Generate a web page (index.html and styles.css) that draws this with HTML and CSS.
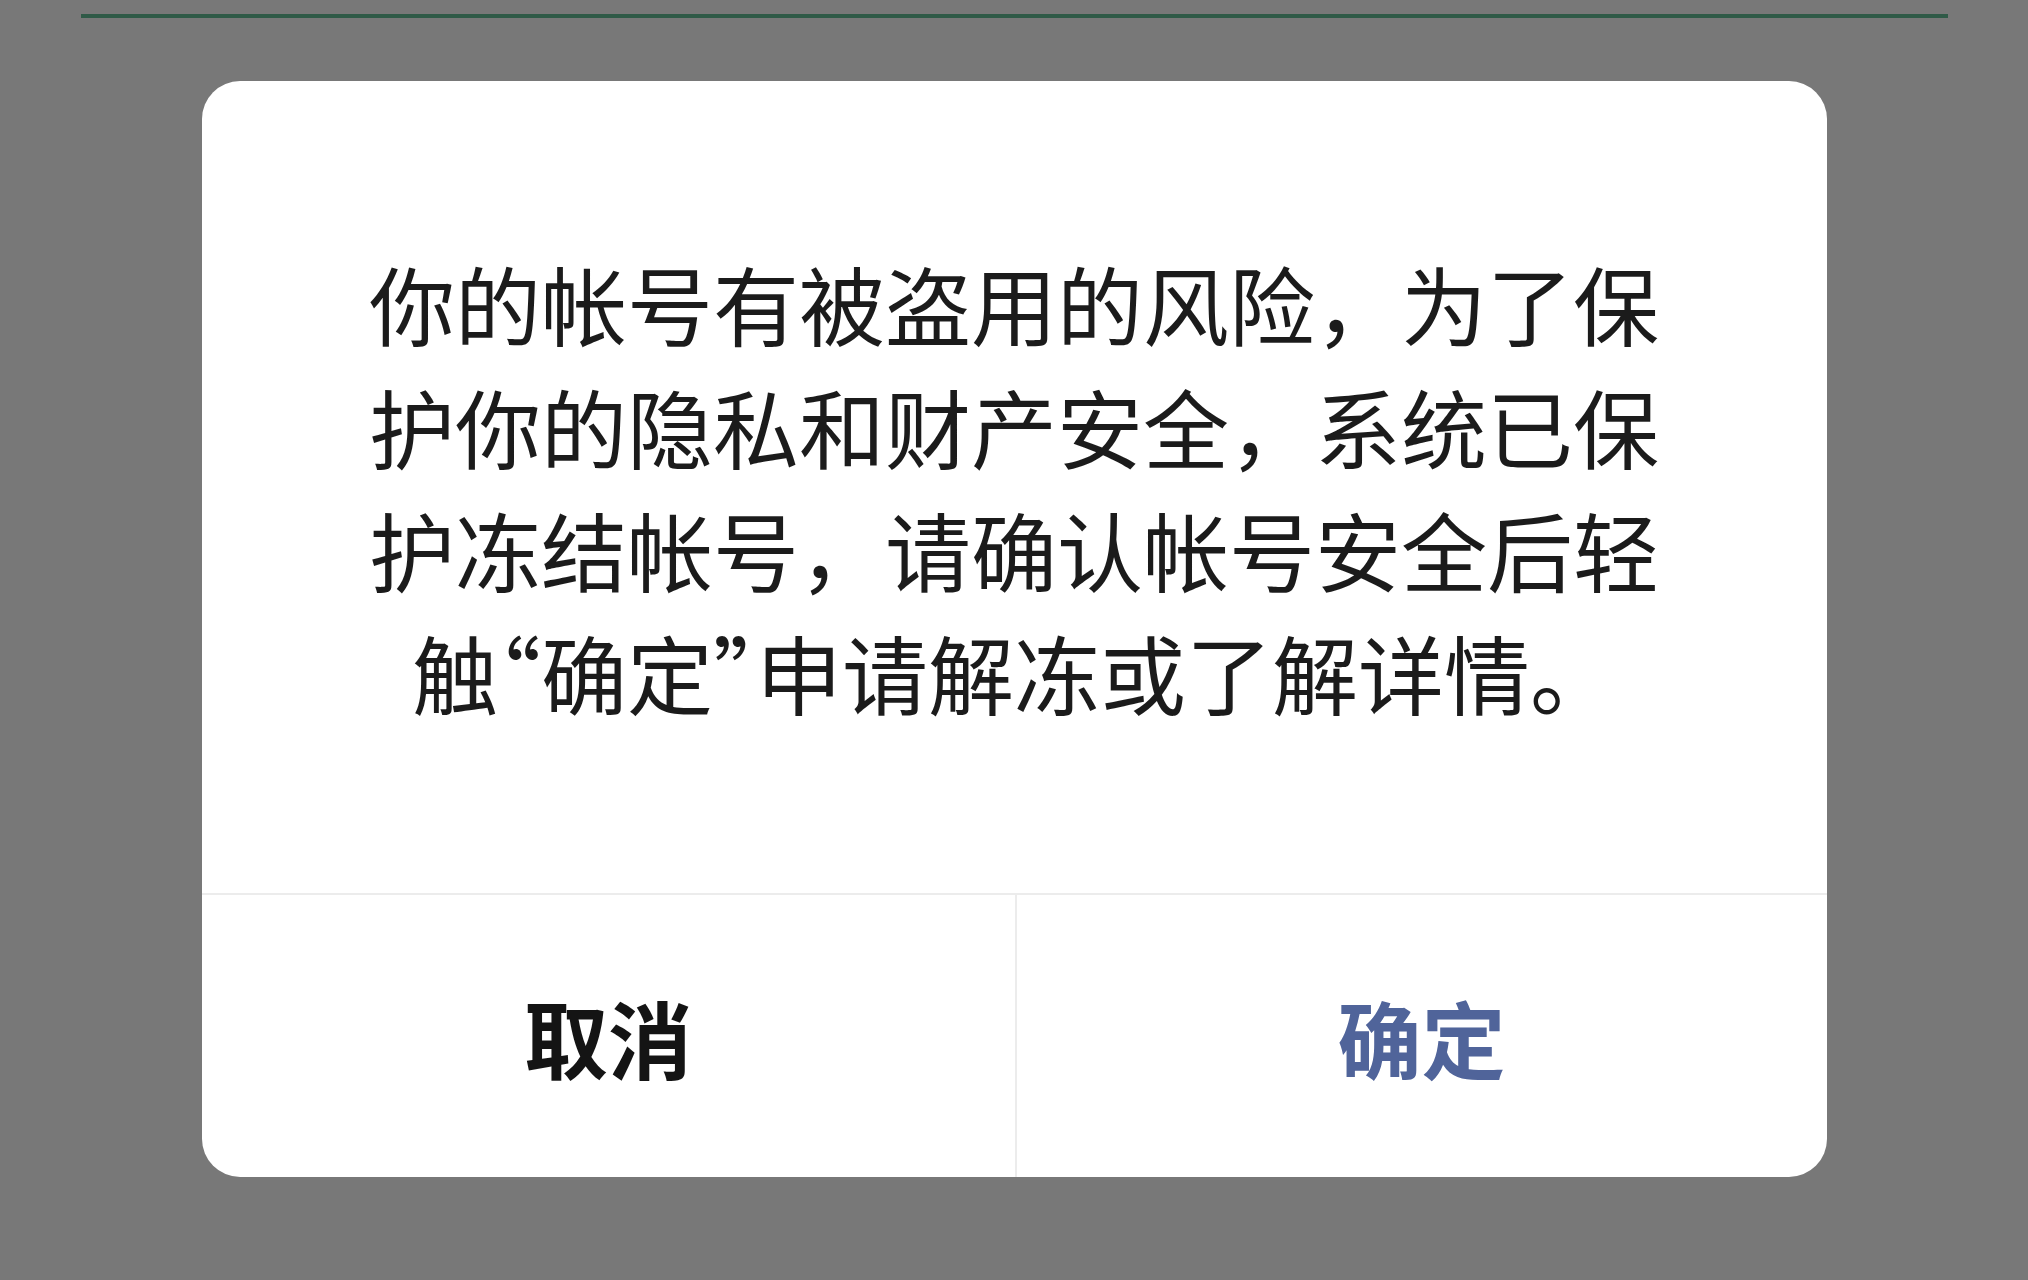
FILE: index.html
```html
<!DOCTYPE html>
<html lang="zh-CN">
<head>
<meta charset="utf-8">
<title>帐号冻结</title>
<link rel="stylesheet" href="styles.css">
</head>
<body>
<div class="page">
  <div class="topline"></div>
  <div class="dialog">
    <div class="dialog-body">
      <p class="message">你的帐号有被盗用的风险，为了保护你的隐私和财产安全，系统已保护冻结帐号，请确认帐号安全后轻触<span class="q">“</span>确定<span class="q">”</span>申请解冻或了解详情。</p>
    </div>
    <div class="dialog-actions">
      <div class="btn btn-cancel">取消</div>
      <div class="btn btn-ok">确定</div>
    </div>
  </div>
</div>
</body>
</html>
```

FILE: styles.css
```css
html, body {
  margin: 0;
  padding: 0;
  background: #787878;
}
body {
  width: 2028px;
  height: 1280px;
  overflow: hidden;
  font-family: "Noto Sans CJK SC", "Noto Sans", sans-serif;
}
.page {
  padding-top: 14px;
}
.topline {
  height: 4px;
  margin: 0 80px 0 81px;
  background: #2f5a47;
}
.dialog {
  width: 1625px;
  height: 1096px;
  margin: 63px auto 0;
  background: #ffffff;
  border-radius: 38px;
  display: flex;
  flex-direction: column;
  overflow: hidden;
}
.dialog-body {
  height: 812px;
  display: flex;
  align-items: center;
  justify-content: center;
}
.message {
  margin: 0;
  width: 1300px;
  font-size: 86px;
  line-height: 123px;
  color: #1b1b1b;
  text-align: center;
  font-weight: 400;
}
.q {
  font-feature-settings: "halt";
}
.dialog-actions {
  flex: 1;
  display: flex;
  border-top: 2px solid #ececec;
}
.btn {
  display: flex;
  align-items: center;
  justify-content: center;
  font-size: 84px;
  font-weight: 700;
}
.btn-cancel {
  box-sizing: border-box;
  flex: 0 0 815px;
  color: #141414;
  border-right: 2px solid #ececec;
}
.btn-ok {
  flex: 1;
  color: #50649a;
}
```
